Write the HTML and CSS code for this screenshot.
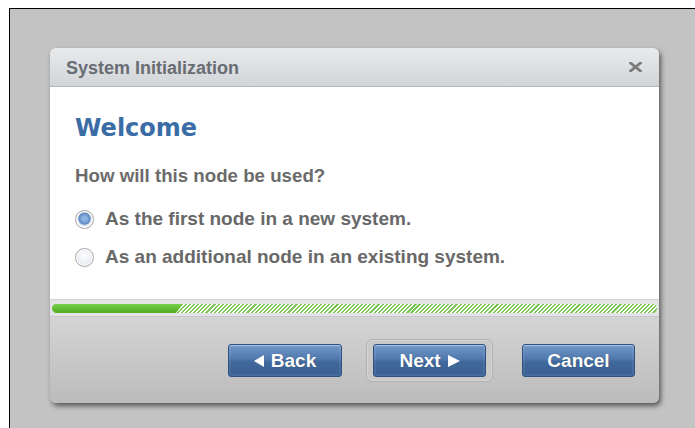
FILE: index.html
```html
<!DOCTYPE html>
<html lang="en">
<head>
<meta charset="utf-8">
<title>System Initialization</title>
<link rel="stylesheet" href="styles.css">
</head>
<body>
<div class="frame">
  <div class="dialog">
    <div class="titlebar">
      <span class="title">System Initialization</span>
      <svg class="close" viewBox="0 0 13 10" width="13" height="10"><path d="M1.5 1 L11.5 9 M11.5 1 L1.5 9" stroke="#7b7b7b" stroke-width="2.8" stroke-linecap="square"/></svg>
    </div>
    <div class="content">
      <h1 class="heading">Welcome</h1>
      <p class="question">How will this node be used?</p>
      <label class="option"><span class="radio checked"></span>As the first node in a new system.</label>
      <label class="option second"><span class="radio"></span>As an additional node in an existing system.</label>
    </div>
    <div class="progress">
      <div class="track"><div class="fill"></div></div>
    </div>
    <div class="footer">
      <button class="btn back"><svg class="arrow" viewBox="0 0 10 12" width="10" height="12"><path d="M0 6 L10 0 L10 12 Z" fill="#fff"/></svg>Back</button>
      <span class="focus-ring"><button class="btn next">Next<svg class="arrow" viewBox="0 0 12 12" width="12" height="12"><path d="M12 6 L0 0 L0 12 Z" fill="#fff"/></svg></button></span>
      <button class="btn cancel">Cancel</button>
    </div>
  </div>
</div>
</body>
</html>
```
FILE: styles.css
```css
html, body {
  margin: 0;
  background: #fff;
}

.frame {
  margin: 8px 0 0 9px;
  border-top: 1px solid #000;
  border-left: 1px solid #000;
  background: #c3c3c3;
  height: 430px;
  padding: 39px 0 0 40px;
  box-sizing: border-box;
  font-family: "Liberation Sans", Arial, sans-serif;
}

.dialog {
  width: 609px;
  border-radius: 6px;
  overflow: hidden;
  box-shadow: 2px 3px 5px rgba(0, 0, 0, 0.55);
  display: flex;
  flex-direction: column;
}

.titlebar {
  height: 39px;
  box-sizing: border-box;
  border-bottom: 1px solid #b4b8bc;
  background: linear-gradient(#e8eaec, #d2d5d8);
  display: flex;
  align-items: center;
  justify-content: space-between;
  padding: 0 17px 0 16px;
}

.title {
  font-weight: bold;
  font-size: 18px;
  color: #686d73;
  padding-top: 2px;
}

.close {
  display: block;
  margin-top: -1px;
}

.content {
  background: #fff;
  height: 212px;
  box-sizing: border-box;
  padding: 26px 0 0 25px;
  display: flex;
  flex-direction: column;
}

.heading {
  margin: 0;
  font-family: "DejaVu Sans", Verdana, sans-serif;
  font-size: 24px;
  font-weight: bold;
  color: #3a6ca6;
  line-height: 30px;
}

.question {
  margin: 22px 0 0;
  font-size: 18.7px;
  font-weight: bold;
  color: #6b6b6b;
  line-height: 22px;
}

.option {
  display: flex;
  align-items: center;
  gap: 11px;
  margin-top: 21px;
  font-size: 19px;
  font-weight: bold;
  color: #686868;
  line-height: 22px;
}

.option.second {
  margin-top: 16px;
}

.radio {
  width: 17px;
  height: 17px;
  border-radius: 50%;
  border: 1px solid #aaaaaa;
  background: radial-gradient(circle at 50% 40%, #fdfdfd, #dce3ed);
  box-shadow: inset 0 0 0 1px #fff, 0 0 1px rgba(0, 0, 0, 0.15);
  flex: none;
}

.radio.checked {
  background: radial-gradient(circle at 50% 45%, #8eb3df 0 2px, #6893cc 5px, #5a86bf 5.6px, #dbe4f0 6.6px, #f4f6f9 8.5px);
}

.progress {
  height: 18px;
  box-sizing: border-box;
  background: #e3e3e6;
  border-top: 1px solid #d3d3d6;
  border-bottom: 1px solid #c6c6ca;
  padding: 4px 2px 0 2px;
}

.track {
  height: 9px;
  border-radius: 5px;
  background: repeating-linear-gradient(135deg, #fff 0 1.4px, #7cc756 1.4px 2.9px);
  overflow: hidden;
}

.fill {
  width: 131px;
  height: 100%;
  background: linear-gradient(#7ad04c, #5fba2e 60%, #55ad27);
  clip-path: polygon(0 0, 100% 0, calc(100% - 7px) 100%, 0 100%);
  border-radius: 5px 0 0 5px;
}

.footer {
  height: 86px;
  box-sizing: border-box;
  background: linear-gradient(#d4d3d5, #bcbcbc);
  display: flex;
  align-items: flex-start;
  justify-content: flex-end;
  padding: 27px 24px 0 0;
}

.btn {
  width: 113px;
  height: 33px;
  border: 1px solid #2f5283;
  border-radius: 3px;
  background: linear-gradient(#7298c8, #5079ae 45%, #41689b 55%, #3b6194);
  box-shadow: inset 0 1px 0 rgba(255, 255, 255, 0.35), inset 0 0 0 2px rgba(255, 255, 255, 0.06);
  color: #fff;
  font-family: "Liberation Sans", Arial, sans-serif;
  font-size: 19px;
  font-weight: bold;
  text-shadow: 0 0 1px rgba(0, 0, 0, 0.35);
  display: flex;
  align-items: center;
  justify-content: center;
  gap: 7px;
  padding: 0;
}

.back {
  width: 114px;
  margin-right: 24px;
}

.focus-ring {
  margin-top: -5px;
  padding: 4px 6px;
  border: 1px solid #b0b0b0;
  border-radius: 6px;
  background: #c9c9c9;
  box-shadow: inset 0 0 0 1px #d6d6d6;
  margin-right: 29px;
  display: flex;
}

.arrow {
  display: block;
}
```
